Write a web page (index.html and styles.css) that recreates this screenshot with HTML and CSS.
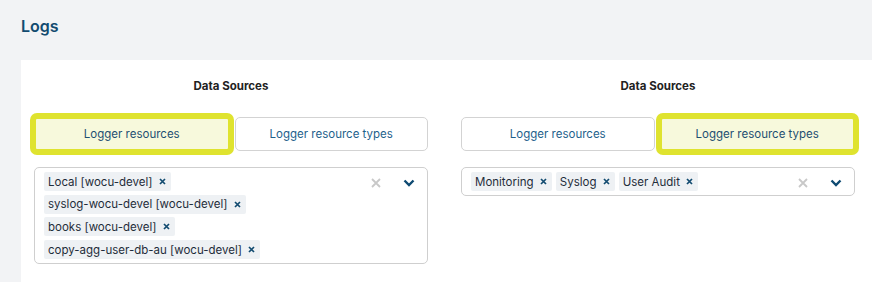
FILE: index.html
```html
<!DOCTYPE html>
<html lang="en">
<head>
  <meta charset="UTF-8">
  <title>Logs</title>
  <link rel="stylesheet" href="styles.css">
</head>
<body>

<div class="page">
  <h1 class="page-title">Logs</h1>

  <div class="panel">

    <!-- Left source picker -->
    <div class="source-col">
      <h3 class="col-title">Data Sources</h3>
      <div class="toggle-group">
        <button class="toggle-btn selected">Logger resources</button>
        <button class="toggle-btn">Logger resource types</button>
      </div>
      <div class="multi-select">
        <div class="chips stacked">
          <span class="chip">Local [wocu-devel] <svg class="chip-x" width="7" height="7" viewBox="0 0 7 7"><path d="M1 1L6 6M6 1L1 6"/></svg></span>
          <span class="chip">syslog-wocu-devel [wocu-devel] <svg class="chip-x" width="7" height="7" viewBox="0 0 7 7"><path d="M1 1L6 6M6 1L1 6"/></svg></span>
          <span class="chip">books [wocu-devel] <svg class="chip-x" width="7" height="7" viewBox="0 0 7 7"><path d="M1 1L6 6M6 1L1 6"/></svg></span>
          <span class="chip">copy-agg-user-db-au [wocu-devel] <svg class="chip-x" width="7" height="7" viewBox="0 0 7 7"><path d="M1 1L6 6M6 1L1 6"/></svg></span>
        </div>
        <div class="select-icons">
          <svg class="clear-icon" width="10" height="10" viewBox="0 0 10 10"><path d="M1 1L9 9M9 1L1 9" stroke="#c8c8c8" stroke-width="1.8"/></svg>
          <svg class="chevron-icon" width="12" height="8" viewBox="0 0 12 8"><path d="M1.5 1.5L6 6L10.5 1.5" fill="none" stroke="#0e4a72" stroke-width="2.4"/></svg>
        </div>
      </div>
    </div>

    <!-- Right source picker -->
    <div class="source-col">
      <h3 class="col-title">Data Sources</h3>
      <div class="toggle-group">
        <button class="toggle-btn">Logger resources</button>
        <button class="toggle-btn selected">Logger resource types</button>
      </div>
      <div class="multi-select">
        <div class="chips">
          <span class="chip">Monitoring <svg class="chip-x" width="7" height="7" viewBox="0 0 7 7"><path d="M1 1L6 6M6 1L1 6"/></svg></span>
          <span class="chip">Syslog <svg class="chip-x" width="7" height="7" viewBox="0 0 7 7"><path d="M1 1L6 6M6 1L1 6"/></svg></span>
          <span class="chip">User Audit <svg class="chip-x" width="7" height="7" viewBox="0 0 7 7"><path d="M1 1L6 6M6 1L1 6"/></svg></span>
        </div>
        <div class="select-icons">
          <svg class="clear-icon" width="10" height="10" viewBox="0 0 10 10"><path d="M1 1L9 9M9 1L1 9" stroke="#c8c8c8" stroke-width="1.8"/></svg>
          <svg class="chevron-icon" width="12" height="8" viewBox="0 0 12 8"><path d="M1.5 1.5L6 6L10.5 1.5" fill="none" stroke="#0e4a72" stroke-width="2.4"/></svg>
        </div>
      </div>
    </div>

  </div>
</div>

</body>
</html>
```

FILE: styles.css
```css
body {
  margin: 0;
  font-family: Inter, "Noto Sans", sans-serif;
  background-color: #f2f3f5;
  overflow: hidden;
}
.page {
  padding: 14px 0 0 21px;
}
.page-title {
  margin: 0;
  font-size: 16px;
  font-weight: 600;
  color: #124b70;
  line-height: 24px;
}
.panel {
  margin-top: 22px;
  background-color: #fff;
  padding: 15px 15px 40px 13px;
  display: flex;
  gap: 33px;
  height: 200px;
}
.source-col {
  width: 394px;
}
.col-title {
  margin: 0;
  text-align: center;
  font-size: 11.5px;
  font-weight: 700;
  color: #222;
  line-height: 22px;
}
.toggle-group {
  display: flex;
  gap: 5px;
  margin-top: 20px;
}
.toggle-btn {
  flex: 1;
  height: 34px;
  background: #fff;
  border: 1px solid #d3d3d3;
  border-radius: 5px;
  font-family: inherit;
  font-size: 11.5px;
  color: #1e5f8c;
  cursor: pointer;
}
.toggle-btn.selected {
  background: #f7f9dc;
  border: 2px solid #dfe32f;
  box-shadow: 0 0 0 4px #dfe32f;
  border-radius: 3px;
  color: #1e4f72;
}
.multi-select {
  margin-top: 16px;
  border: 1px solid #cfcfcf;
  border-radius: 5px;
  display: flex;
  align-items: flex-start;
  padding: 4px 0 4px 9px;
}
.chips {
  flex: 1;
  display: flex;
  flex-wrap: wrap;
  gap: 4px;
}
.chips.stacked {
  flex-direction: column;
  align-items: flex-start;
  gap: 3.7px;
}
.chip {
  display: flex;
  align-items: center;
  height: 19px;
  background: #eef1f4;
  border-radius: 2px;
  padding: 0 5px 0 4px;
  font-size: 11.5px;
  color: #1f2d3a;
  white-space: pre;
}
.chip-x {
  margin-left: 3px;
  stroke: #124b70;
  stroke-width: 1.7;
}
.select-icons {
  display: flex;
  align-items: center;
  gap: 22px;
  padding: 6px 12px 0 0;
}
```
